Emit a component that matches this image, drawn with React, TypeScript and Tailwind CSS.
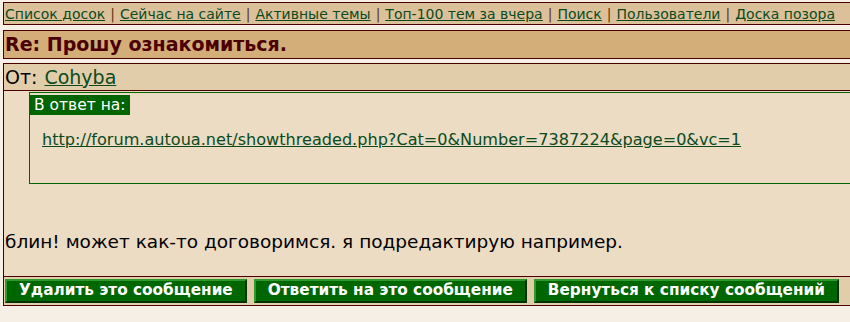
import React from "react";

const navLinks = [
  "Список досок",
  "Сейчас на сайте",
  "Активные темы",
  "Топ-100 тем за вчера",
  "Поиск",
  "Пользователи",
  "Доска позора",
];

const buttons = [
  "Удалить это сообщение",
  "Ответить на это сообщение",
  "Вернуться к списку сообщений",
];

const font = { fontFamily: '"DejaVu Sans", Verdana, sans-serif' };

const App: React.FC = () => {
  return (
    <div
      className="w-[850px] h-[322px] overflow-hidden bg-[#f5efe6] pt-[2px] pl-[3px]"
      style={font}
    >
      <div className="w-[900px]">
        {/* nav */}
        <div className="h-[23px] border border-[#4a0000] bg-[#dcc09a] flex items-center pl-[1px] text-[14px] leading-none text-[#5a3a10] whitespace-nowrap">
          {navLinks.map((l, i) => (
            <span key={l}>
              {i > 0 && <span className="px-[5px]">|</span>}
              <a className="underline text-[#0a4a1e]">{l}</a>
            </span>
          ))}
        </div>

        {/* title */}
        <div className="mt-[5px] h-[29px] border border-[#4a0000] bg-[#d4ae78] flex items-center pl-[1px]">
          <h1 className="text-[19px] font-bold text-[#4a0000] leading-none">
            Re: Прошу ознакомиться.
          </h1>
        </div>

        {/* from */}
        <div className="mt-[4px] border border-[#4a0000] border-b-0">
          <div className="h-[27px] bg-[#e2cdaa] flex items-center pl-[1px] text-[19px] leading-none border-b border-[#4a0000]">
            <span className="text-black">От:</span>
            <a className="ml-[7px] underline text-[#0a4a1e]">Cohyba</a>
          </div>

          {/* body */}
          <div className="bg-[#ecdcc4] h-[186px] pt-[1px] border-b border-[#4a0000]">
            <div className="ml-[25px] h-[92px] border border-[#006400]">
              <div className="inline-block bg-[#006400] text-white text-[15.5px] leading-[20px] px-[4px]">
                В ответ на:
              </div>
              <div className="mt-[15px] pl-[12px] text-[16.1px] leading-none">
                <a className="underline text-[#0a4a1e]">
                  http://forum.autoua.net/showthreaded.php?Cat=0&amp;Number=7387224&amp;page=0&amp;vc=1
                </a>
              </div>
            </div>
            <p className="mt-[49px] pl-[1px] text-[18.5px] leading-none text-black">
              блин! может как-то договоримся. я подредактирую например.
            </p>
          </div>

          {/* buttons */}
          <div className="h-[29px] bg-[#e2cdaa] flex items-center gap-[7px] pl-[1px] border-b border-[#4a0000]">
            {buttons.map((b) => (
              <button
                key={b}
                className="h-[24px] px-[12px] bg-[#006600] text-white font-bold text-[15.3px] leading-none border-2 border-t-[#2e9a2e] border-l-[#2e9a2e] border-b-[#003300] border-r-[#003300]"
                style={font}
              >
                {b}
              </button>
            ))}
          </div>
        </div>
      </div>
    </div>
  );
};

export default App;
